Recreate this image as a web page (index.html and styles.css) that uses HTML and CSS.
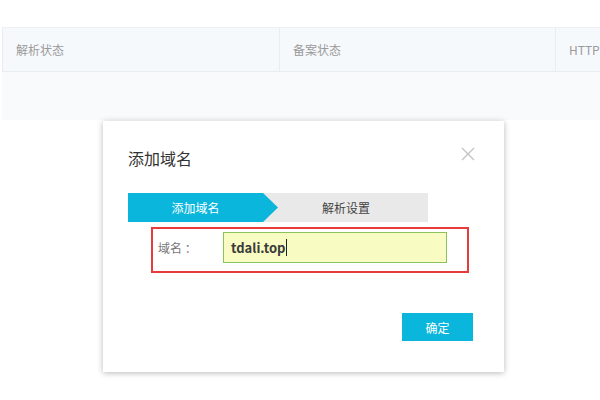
FILE: index.html
```html
<!DOCTYPE html>
<html lang="zh-CN">
<head>
  <meta charset="UTF-8">
  <title>添加域名</title>
  <link rel="stylesheet" href="styles.css">
</head>
<body>

<div class="page">
  <div class="table">
    <div class="table-head">
      <div class="cell">解析状态</div>
      <div class="cell">备案状态</div>
      <div class="cell">HTTPS</div>
    </div>
    <div class="table-empty"></div>
  </div>
</div>

<div class="modal">
  <h2 class="modal-title">添加域名</h2>
  <span class="modal-close">
    <svg width="14" height="14" viewBox="0 0 14 14">
      <path d="M1 1L13 13M13 1L1 13" stroke="#c4c4c4" stroke-width="1.4" fill="none"/>
    </svg>
  </span>

  <div class="steps">
    <div class="step step-active">添加域名</div>
    <div class="step step-next">解析设置</div>
  </div>

  <div class="form-row">
    <label class="form-label">域名 ：</label>
    <div class="form-input"><span class="typed">tdali.top</span><span class="caret"></span></div>
  </div>

  <div class="modal-footer">
    <button class="btn-primary">确定</button>
  </div>
</div>

</body>
</html>
```

FILE: styles.css
```css
* {
  margin: 0;
  padding: 0;
  box-sizing: border-box;
}

html, body {
  height: 100%;
  background: #fff;
  font-family: "Noto Sans CJK SC", "Noto Sans", sans-serif;
  color: #333;
  overflow: hidden;
}

.page {
  padding: 27px 0 0 2px;
}

.table-head {
  display: grid;
  grid-template-columns: 277px 276px 1fr;
  height: 45px;
  background: #f6f9fc;
  border-top: 1px solid #edf1f5;
  border-bottom: 1px solid #e8edf2;
  border-left: 1px solid #e8edf2;
}

.cell {
  display: flex;
  align-items: center;
  padding-left: 13px;
  font-size: 12px;
  color: #9a9a9a;
  border-right: 1px solid #e8edf2;
}

.table-empty {
  height: 48px;
  background: #f9fafb;
}

.modal {
  position: absolute;
  left: 103px;
  top: 121px;
  width: 401px;
  height: 251px;
  background: #fff;
  box-shadow: 0 1px 6px rgba(0, 0, 0, 0.28);
  padding: 26px 0 0 25px;
}

.modal-title {
  font-size: 16px;
  font-weight: normal;
  line-height: 22px;
  color: #333;
}

.modal-close {
  position: absolute;
  right: 29px;
  top: 26px;
  width: 14px;
  height: 14px;
}

.modal-close svg {
  display: block;
}

.steps {
  display: flex;
  width: 300px;
  height: 29px;
  margin-top: 24px;
  background: #e9e9e9;
}

.step {
  display: flex;
  align-items: center;
  justify-content: center;
  flex: 1;
  font-size: 12px;
  color: #444;
}

.step-active {
  flex: 0 0 150px;
  padding-right: 15px;
  background: #0bb6dc;
  color: #fff;
  clip-path: polygon(0 0, 135px 0, 150px 50%, 135px 100%, 0 100%);
}

.step-next {
  padding-right: 14px;
}

.form-row {
  display: flex;
  align-items: flex-start;
  width: 318px;
  height: 46px;
  margin: 5px 0 0 23px;
  padding: 3px 0 0 5px;
  border: 2px solid #e83b3b;
}

.form-label {
  width: 65px;
  line-height: 31px;
  font-size: 12px;
  color: #777;
}

.form-input {
  display: flex;
  align-items: center;
  width: 224px;
  height: 31px;
  padding-left: 7px;
  background: #f8fcc2;
  border: 1px solid #8cc25a;
}

.typed {
  font-size: 13px;
  font-weight: bold;
  color: #3a3a3a;
}

.caret {
  width: 1px;
  height: 17px;
  margin-left: 1px;
  background: #222;
}

.modal-footer {
  display: flex;
  justify-content: flex-end;
  margin-top: 40px;
  padding-right: 31px;
}

.btn-primary {
  width: 71px;
  height: 28px;
  border: none;
  background: #0bb6dc;
  color: #fff;
  font-family: inherit;
  font-size: 12px;
  cursor: pointer;
}
```
